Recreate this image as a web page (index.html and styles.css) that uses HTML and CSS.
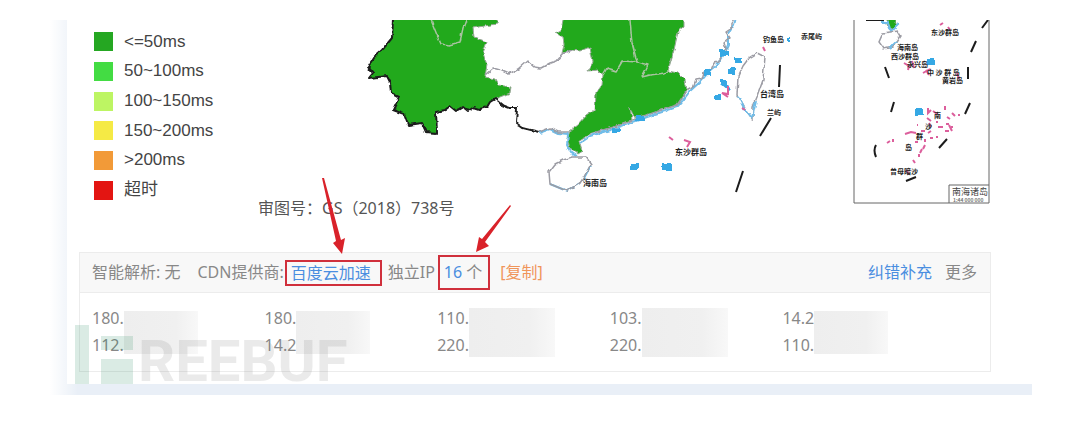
FILE: index.html
```html
<!DOCTYPE html>
<html lang="zh-CN">
<head>
<meta charset="utf-8">
<meta name="viewport" content="width=device-width, initial-scale=1">
<title>CDN</title>
<link rel="stylesheet" href="styles.css">
</head>
<body>
<main class="frame">
<div class="content">
  <section class="map-area">
    <svg class="map" viewBox="67 20 965 232" aria-hidden="true">
      <defs>
        <filter id="rough" x="-5%" y="-5%" width="110%" height="110%">
          <feTurbulence type="fractalNoise" baseFrequency="0.16" numOctaves="2" seed="4" result="n"/>
          <feDisplacementMap in="SourceGraphic" in2="n" scale="4" xChannelSelector="R" yChannelSelector="G"/>
        </filter>
        <clipPath id="top"><path d="M67 20H1032V252H67Z"/></clipPath>
      </defs>
      <g clip-path="url(#top)">
        <g filter="url(#rough)" stroke-linejoin="round" fill="none">
          <path class="land" d="M393 10V20L392 38 382 50 374 57 368 67 373 73 369 78 387 76 390 82 391 93 399 97 393 110 404 114 408 125 422 123 426 132 437 133 436 112 445 110 450 106 456 111 463 107 468 111 474 107 480 109 487 107 490 102 495 99 510 93 511 87 498 85 495 79 485 77 487 65 483 53 487 42 474 37 473 28 485 26 497 24 498 10Z"/>
          <path class="land" d="M563 10V20L561 30 555 33 563 37 564 45 562 53 572 50 580 51 590 47 593 62 588 71 598 70 603 75 602 85 596 93 595 110 586 116 578 125 570 131 567 139 570 149 577 154 582 151 579 141 590 134 600 131 613 127 625 122 632 120 630 107 634 118 650 114 664 109 677 105 683 98 687 90 685 80 678 73 668 71 674 50 678 32 684 27 684 10Z"/>
          <path class="edge" d="M431 10V20L437 35 441 44 449 45 460 42 463 28 466 20 M630 10V20L632 43 637 62 623 61 617 71 607 68 603 75 M637 62 648 65 642 77 650 75 665 73 669 70"/>
          <path class="line" d="M485 75 493 68 500 70 509 74 518 69 527 61 534 67 541 68 550 63 556 61 562 54 572 50"/>
          <path class="black" d="M393 10V20L392 38 382 50 374 57 368 67 373 73 369 78 387 76 390 82 391 93 399 97 393 110 404 114 408 125 422 123 426 132 437 133 436 112 445 110 450 106 456 111 463 107 468 111 474 107 480 109 487 107 490 102 495 99 502 105 510 108 517 108 516 123 523 128 531 130 539 132"/>
          <path class="sea" d="M539 133 550 129 558 133 568 134 567 145 571 153 576 156 M580 143 590 136 613 129 633 122 650 116 677 107 684 99 690 91 700 82 707 74 715 67 723 56 728 45 728 34 734 25 738 10"/>
          <path class="line" d="M539 132 550 128 558 132 569 132 M590 134 613 127 633 120 650 114 677 105 688 89 694 86 696 80 702 79 704 72 711 70 714 63 719 62 722 53 726 49 724 43 730 38 726 32 732 28 732 23 737 10"/>
          <path class="line" d="M757 53 765 57 763 80 757 97 753 107 753 120 744 107 737 95 738 77 743 66 749 58Z"/>
          <path class="sea-thin" d="M738 96 744 108 752 118 756 101 M580 183 567 191 550 184 M583 180 591 165"/>
          <path class="line" d="M563 160 573 157 586 157 591 164 584 177 580 183 567 191 550 184 549 172 555 164Z"/>
        </g>
        <g class="islets" filter="url(#rough)">
          <path d="M735 57h7v6h-7z M728 68h7v6h-7z M721 80h6v5l4 4-2 2-8-7z M714 95h7v5h-7z M720 50h9v6h-9z M630 163h9v7h-9z M662 163h9v7h-9z M704 70h7v5h-7z M636 116h9v5h-9z M612 128h8v4h-8z M787 38h3v3h-3z"/>
          <path d="M927 58h7v7h-7z M915 108h8v7h-8z"/>
        </g>
        <path class="coral" d="M728 86v8l-6-1 6 4 M669 137l4 3 M684 140l6 2-3 5 M763 47l2 4 M742 108l3 2"/>
        <path class="mark" d="M780 65L779 87 M771 118L760 136 M743 171L736 192"/>
        <g class="labels">
          <text x="763" y="42">钓鱼岛</text><text x="801" y="39">赤尾屿</text>
          <text class="big" x="760" y="97">台湾岛</text><text x="767" y="115">兰屿</text>
          <text class="big" x="675" y="155">东沙群岛</text><text class="big" x="583" y="186">海南岛</text>
        </g>

        <path class="inset" d="M854 14V203H989V14 M949 203V185H989"/>
        <g filter="url(#rough)" fill="none">
          <path class="land" d="M889 18h7v8l-5 3-4-4z"/>
          <path class="sea" d="M880 23l8 0 3 8 8-8"/>
          <path class="line" d="M883 33 897 31 900 36 893 47 884 49 879 42Z"/>
          <path class="sea-thin" d="M896 42 889 49"/>
        </g>
        <path class="black" d="M866 20h18"/>
        <path class="mark" d="M988 20L982 28 M976 41L971 52 M968 67V79 M885 67L889 78 M894 102L891 112 M970 103L965 114 M876 145Q873 150 876 157 M947 139L939 148 M906 181L916 177"/>
        <path class="coral" d="M940 25l3-2 M948 27l2 3 M904 63l5 3-1 4 M912 61l2 7 M923 73l7-4 M926 70l3 5 M957 73l2 6"/>
        <path class="coral dots" d="M928 108v5l3-3 M927 118l4 3 M929 123l2 4 M933 111l4 3 M945 106v4 M952 113l3 3 M958 115h2 M947 117l3 2 M936 122h2 M938 127h5 M946 124h3 M951 127h2 M945 131h4 M949 125l3 6 M905 134l6-2 5 1 M921 131h4 M928 133l3-2 M930 138h3 M936 137h2 M925 139v3 M915 142h3 M925 145l-2 4 M922 149l-2 4 M919 154v3 M887 143l3-2 M893 139v3 M913 160l2 3 M917 125h1 M906 170l3 4"/>
        <g class="labels">
          <text x="931" y="35">东沙群岛</text><text x="897" y="50">海南岛</text><text x="891" y="59">西沙群岛</text>
          <text x="907" y="67">永兴岛</text><text x="927" y="75">中 沙 群 岛</text><text x="942" y="83">黄岩岛</text>
          <text x="934" y="118">南</text><text x="925" y="129">沙</text><text x="916" y="139">群</text><text x="905" y="150">岛</text>
          <text x="890" y="174">曾母暗沙</text><text class="title" x="952" y="195">南海诸岛</text><text class="scale" x="953" y="202">1:44 000 000</text>
        </g>
      </g>
    </svg>
    <ul class="legend">
      <li><i class="swatch s1"></i>&lt;=50ms</li>
      <li><i class="swatch s2"></i>50~100ms</li>
      <li><i class="swatch s3"></i>100~150ms</li>
      <li><i class="swatch s4"></i>150~200ms</li>
      <li><i class="swatch s5"></i>&gt;200ms</li>
      <li><i class="swatch s6"></i>超时</li>
    </ul>
    <p class="caption">审图号：GS（2018）738号</p>
    <svg class="map arrows" viewBox="67 20 965 232" aria-hidden="true">
      <path d="M322 178L324 178 341 240 345 238 342 254 333 243 336 241Z M510 205L511 206 485 242 489 246 476 252 479 237 482 239Z"/>
    </svg>
  </section>

  <section class="panel">
    <header class="head">
      <span class="resolve">智能解析: 无</span>
      <span>CDN提供商:</span>
      <a class="boxed provider" href="#">百度云加速</a>
      <span class="unique">独立IP</span>
      <span class="boxed count"><a href="#">16</a> 个</span>
      <button class="copy" type="button">[复制]</button>
      <nav class="links"><a href="#">纠错补充</a><a class="more" href="#">更多</a></nav>
    </header>
    <div class="ips">
      <div class="ip"><p>180.<br>112.</p><i class="mask"></i></div>
      <div class="ip"><p>180.<br>14.2</p><i class="mask"></i></div>
      <div class="ip"><p>110.<br>220.</p><i class="mask wide"></i></div>
      <div class="ip"><p>103.<br>220.</p><i class="mask wide"></i></div>
      <div class="ip"><p>14.2<br>110.</p><i class="mask"></i></div>
    </div>
  </section>

  <div class="watermark" aria-hidden="true">
    <svg width="58" height="59" viewBox="0 0 58 59"><path d="M0 0H14V59H0Z M26 11H58V25H26Z M26 34H58V59H26Z"/></svg>
    <span>REEBUF</span>
  </div>
</div>
</main>
</body>
</html>
```

FILE: styles.css
```css
* { box-sizing: border-box; }
body {
  margin: 0;
  padding: 20px 48px 28px 50px;
  background: #fff;
  color: #888;
  font: 16px/27px "Noto Sans", "Noto Sans CJK SC", sans-serif;
}
p, ul { margin: 0; padding: 0; list-style: none; }
a { color: #4a8ee0; text-decoration: none; }

.frame {
  padding: 0 0 11px 17px;
  background:
    linear-gradient(90deg, #fff, transparent 28px),
    linear-gradient(#e9eff7, #e9eff7);
}
.content { position: relative; padding-bottom: 12px; background: #fff; }

.map-area { display: grid; }
.map-area > * { grid-area: 1 / 1; }
.map { display: block; width: 100%; }
.land { fill: #22a91e; stroke: #9aa898; stroke-width: 1; }
.edge { stroke: #a9c3a0; stroke-width: 1.5; }
.line { stroke: #9c9ca4; stroke-width: 1.5; }
.black { fill: none; stroke: #1c1c1c; stroke-width: 2; }
.sea { stroke: #6fbce8; stroke-width: 2; }
.sea-thin { stroke: #6fbce8; stroke-width: 2; }
.islets { fill: #35a8e4; }
.coral { fill: none; stroke: #dc5f9c; stroke-width: 2; }
.mark { fill: none; stroke: #1c1c1c; stroke-width: 2; }
.inset { fill: none; stroke: #666; stroke-width: 1; }
.labels { fill: #222; font: bold 7px "Noto Sans CJK SC", sans-serif; }
.labels .big { font-size: 8px; }
.labels .title { fill: #444; font-size: 9px; font-weight: normal; }
.labels .scale { fill: #777; font-size: 5px; }
.arrows { overflow: visible; fill: #d9222a; pointer-events: none; }

.legend {
  display: grid;
  grid-auto-rows: 1fr;
  align-self: start;
  justify-self: start;
  height: 178px;
  margin: 7px 0 0 27px;
  color: #444;
  font: 17px/20px "Liberation Sans", "Noto Sans CJK SC", sans-serif;
}
.legend li { display: flex; align-items: center; gap: 11px; }
.swatch { width: 19px; height: 19px; }
.s1 { background: #25a722; }
.s2 { background: #43dc43; }
.s3 { background: #bdf563; }
.s4 { background: #f5ea45; }
.s5 { background: #f29a38; }
.s6 { background: #e31512; }
.caption {
  align-self: end;
  justify-self: start;
  margin: 0 0 30px 191px;
  color: #555;
}

.panel { position: relative; margin: 0 41px 0 12px; border: 1px solid #ececec; }
.arrows { position: relative; z-index: 1; }
.head {
  display: flex;
  align-items: center;
  height: 40px;
  padding: 0 13px 0 12px;
  border-bottom: 1px solid #ececec;
  background: #f8f8f8;
  white-space: nowrap;
}
.resolve { margin-right: 17px; }
.boxed { border: 2px solid #d0303c; }
.provider { margin-left: 1px; padding: 0 9px 0 4px; line-height: 22px; }
.unique { margin: 0 3px 0 6px; }
.count { padding: 0 6px 0 4px; line-height: 31px; }
.copy {
  margin-left: 10px;
  padding: 0;
  border: 0;
  background: none;
  color: #f0955a;
  font: inherit;
}
.links { display: flex; gap: 13px; margin-left: auto; }
.more { color: #888; }

.ips {
  display: grid;
  grid-template-columns: repeat(5, 1fr);
  padding: 12px 35px 12px 12px;
}
.ip { display: flex; align-items: center; }
.mask {
  width: 74px;
  height: 43px;
  background: linear-gradient(90deg, #eee, #f0f0f0 70%, #f8f8f8);
}
.wide { width: 86px; height: 49px; }

.watermark {
  position: absolute;
  left: 8px;
  bottom: 0;
  display: flex;
  align-items: flex-end;
  gap: 5px;
  color: #777;
  font: bold 58px/46px Roboto, sans-serif;
  opacity: 0.15;
  pointer-events: none;
}
.watermark svg { fill: #108050; }
```
